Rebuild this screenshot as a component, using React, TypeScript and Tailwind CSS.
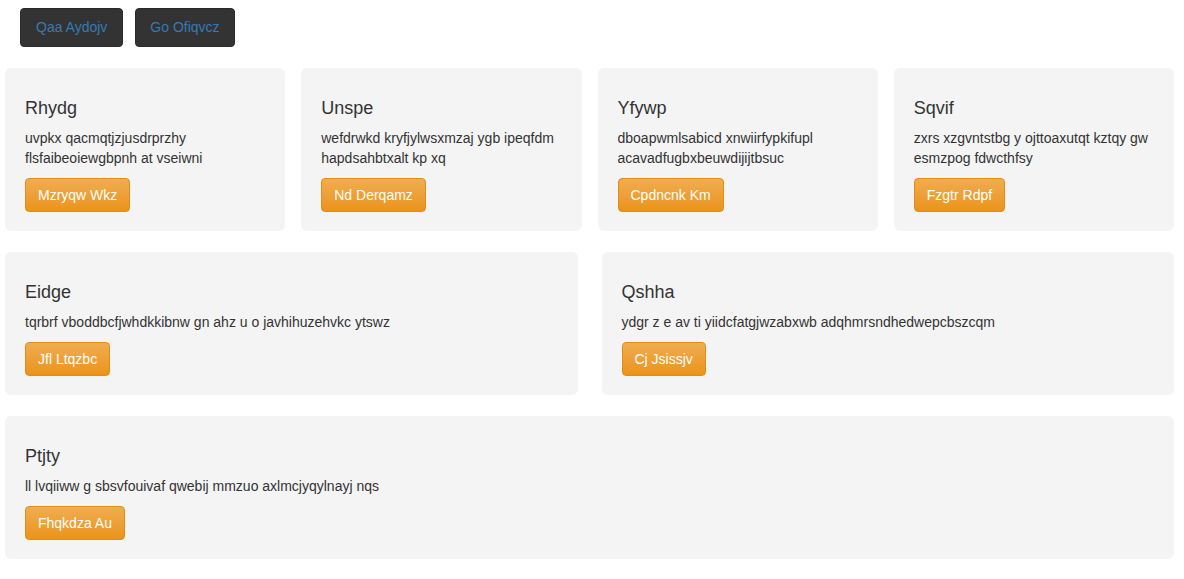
import React from "react";

function Panel({ title, text, btn }: { title: string; text: string; btn: string }) {
  return (
    <div className="bg-[#f4f4f4] rounded-[6px] px-5 pt-[30px] pb-[19px]">
      <h3 className="text-[18px] leading-[20px] text-[#333] m-0">{title}</h3>
      <p className="text-[14px] leading-[20px] text-[#333] mt-[10px] mb-[10px]">{text}</p>
      <button className="h-[34px] px-3 rounded-[4px] border border-[#e38d13] bg-gradient-to-b from-[#f0ad4e] to-[#eb9316] text-white text-[14px] leading-[20px]">
        {btn}
      </button>
    </div>
  );
}

export default function App() {
  return (
    <div className="min-h-[579px] bg-white font-['Liberation_Sans',Arial,sans-serif] text-[#333]">
      <div className="flex gap-3 pl-5 pt-2">
        <button className="h-[39px] px-[15px] rounded-[4px] bg-[#333] border border-[#2a2a2a] text-[#337ab7] text-[14px]">Qaa Aydojv</button>
        <button className="h-[39px] px-[14px] rounded-[4px] bg-[#333] border border-[#2a2a2a] text-[#337ab7] text-[14px]">Go Ofiqvcz</button>
      </div>
      <div className="pl-[5px] pr-[10px] pt-[21px] flex flex-col gap-[21px]">
        <div className="grid grid-cols-4 gap-4">
          <Panel title="Rhydg" text="uvpkx qacmqtjzjusdrprzhy flsfaibeoiewgbpnh at vseiwni" btn="Mzryqw Wkz" />
          <Panel title="Unspe" text="wefdrwkd kryfjylwsxmzaj ygb ipeqfdm hapdsahbtxalt kp xq" btn="Nd Derqamz" />
          <Panel title="Yfywp" text="dboapwmlsabicd xnwiirfypkifupl acavadfugbxbeuwdijijtbsuc" btn="Cpdncnk Km" />
          <Panel title="Sqvif" text="zxrs xzgvntstbg y ojttoaxutqt kztqy gw esmzpog fdwcthfsy" btn="Fzgtr Rdpf" />
        </div>
        <div className="grid grid-cols-2 gap-6">
          <Panel title="Eidge" text="tqrbrf vboddbcfjwhdkkibnw gn ahz u o javhihuzehvkc ytswz" btn="Jfl Ltqzbc" />
          <Panel title="Qshha" text="ydgr z e av ti yiidcfatgjwzabxwb adqhmrsndhedwepcbszcqm" btn="Cj Jsissjv" />
        </div>
        <Panel title="Ptjty" text="ll lvqiiww g sbsvfouivaf qwebij mmzuo axlmcjyqylnayj nqs" btn="Fhqkdza Au" />
      </div>
    </div>
  );
}
